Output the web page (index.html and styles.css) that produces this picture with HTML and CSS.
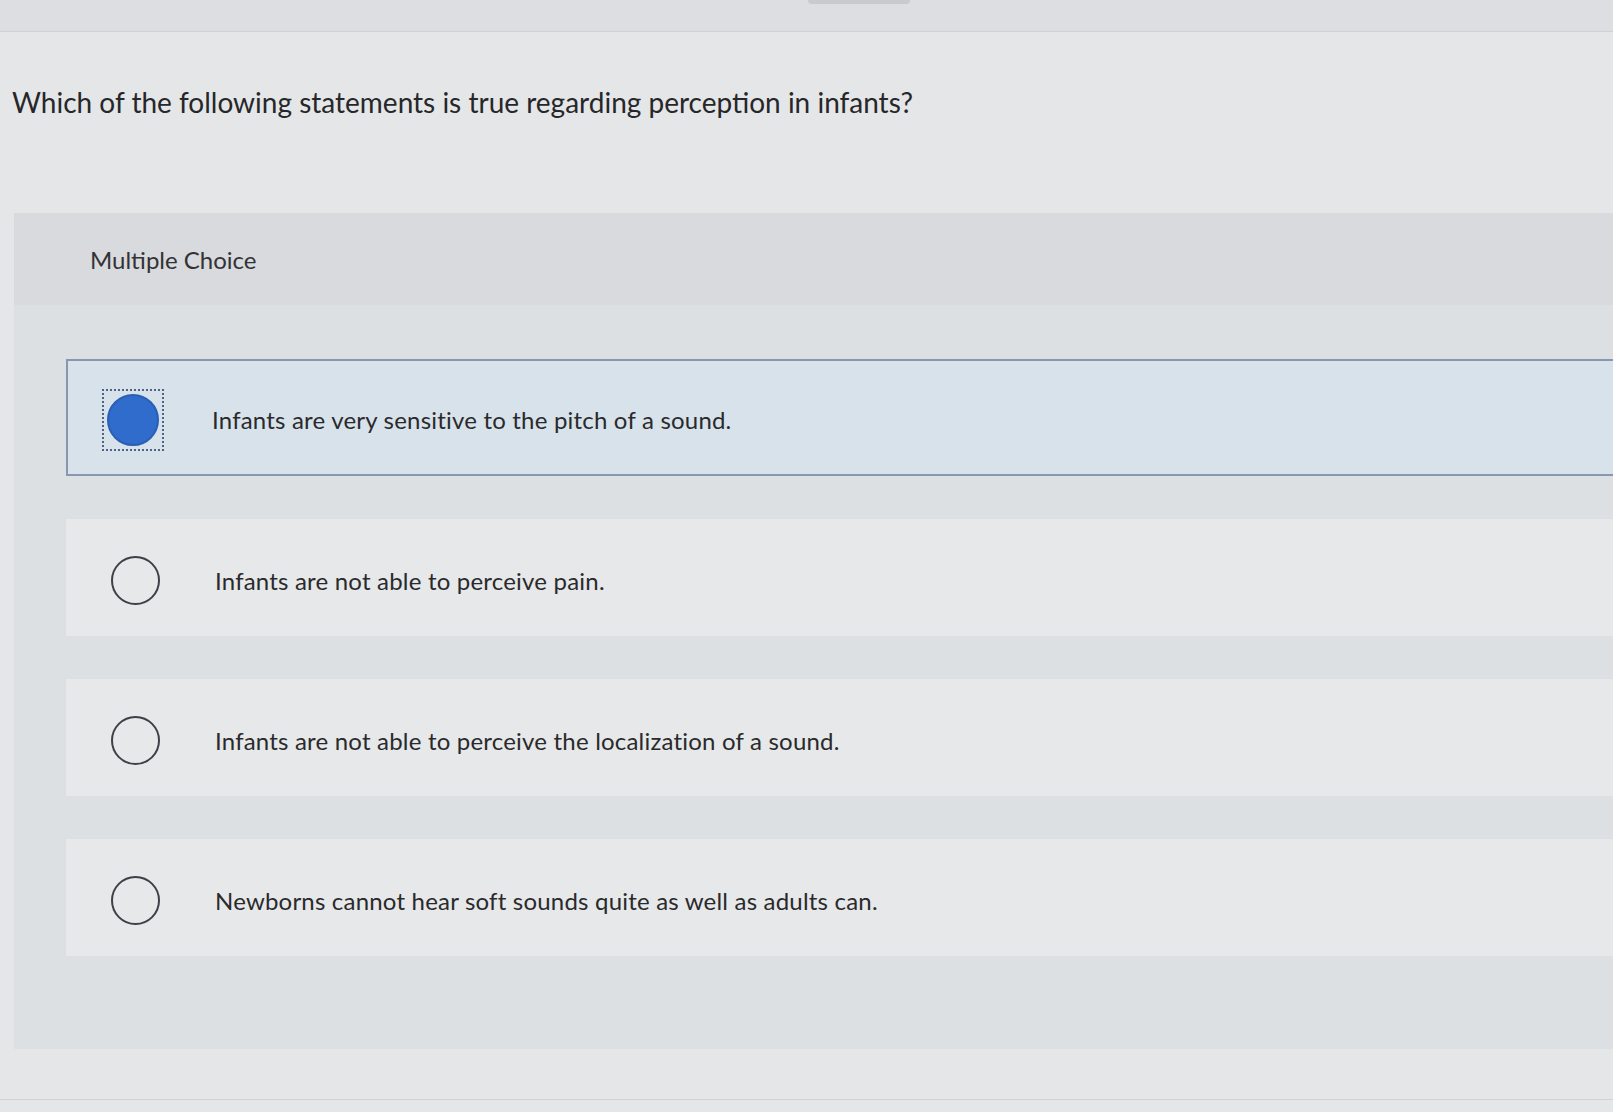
FILE: index.html
```html
<!DOCTYPE html>
<html>
<head>
<meta charset="utf-8">
<link rel="stylesheet" href="styles.css">
</head>
<body>
<div class="topbar"><div class="tab"></div></div>
<h1 class="question">Which of the following statements is true regarding perception in infants?</h1>
<section class="panel">
  <div class="panel-head">Multiple Choice</div>
  <div class="panel-body">
    <div class="option selected">
      <span class="focus"><span class="radio filled"></span></span>
      <span class="label">Infants are very sensitive to the pitch of a sound.</span>
    </div>
    <div class="option">
      <span class="focus plain"><span class="radio"></span></span>
      <span class="label">Infants are not able to perceive pain.</span>
    </div>
    <div class="option">
      <span class="focus plain"><span class="radio"></span></span>
      <span class="label">Infants are not able to perceive the localization of a sound.</span>
    </div>
    <div class="option">
      <span class="focus plain"><span class="radio"></span></span>
      <span class="label">Newborns cannot hear soft sounds quite as well as adults can.</span>
    </div>
  </div>
</section>
<div class="footer-line"></div>
</body>
</html>
```
FILE: styles.css
```css
html, body {
  margin: 0;
  padding: 0;
}
body {
  background: #e4e6e8;
  font-family: Lato, "Liberation Sans", sans-serif;
  color: #2a2a2c;
  overflow: hidden;
  height: 1112px;
}
.topbar {
  height: 31px;
  background: #dcdee1;
  border-bottom: 1px solid #cfd1d4;
  position: relative;
}
.tab {
  position: absolute;
  left: 808px;
  top: 0;
  width: 102px;
  height: 4px;
  background: #c8cace;
  border-radius: 0 0 6px 6px;
}
.question {
  margin: 55px 0 0 12px;
  font-size: 28px;
  font-weight: 400;
  line-height: 30px;
  color: #27272a;
}
.panel {
  margin: 96px 0 0 14px;
  background: #dcdee1;
}
.panel-head {
  height: 92px;
  display: flex;
  align-items: center;
  padding-left: 76px;
  font-size: 24px;
  background: #d8dadd;
  color: #333336;
}
.panel-body {
  padding: 54px 0 93px 52px;
  display: flex;
  flex-direction: column;
  gap: 43px;
  background: #dde0e2;
}
.option {
  height: 117px;
  display: flex;
  align-items: center;
  background: #e6e8e9;
  box-sizing: border-box;
  padding-top: 6px;
}
.option.selected {
  background: #d8e2eb;
  border: 2px solid #8797b2;
  border-right: none;
  padding-top: 4px;
}
.focus {
  width: 58px;
  height: 58px;
  margin-left: 34px;
  display: flex;
  align-items: center;
  justify-content: center;
  border: 2px dotted #4f6184;
}
.focus.plain {
  border-color: transparent;
  margin-left: 38px;
}
.radio {
  width: 49px;
  height: 49px;
  border-radius: 50%;
  border: 2px solid #3d4048;
  box-sizing: border-box;
  display: block;
  flex-shrink: 0;
}
.radio.filled {
  width: 52px;
  height: 52px;
  background: #2f6ccc;
  border-color: #2a5fb5;
}
.label {
  margin-left: 48px;
  font-size: 24px;
  letter-spacing: 0.2px;
  color: #2a2a2c;
}
.focus.plain + .label {
  margin-left: 49px;
}
.footer-line {
  margin-top: 50px;
  height: 1px;
  background: #cfd1d4;
}
```
